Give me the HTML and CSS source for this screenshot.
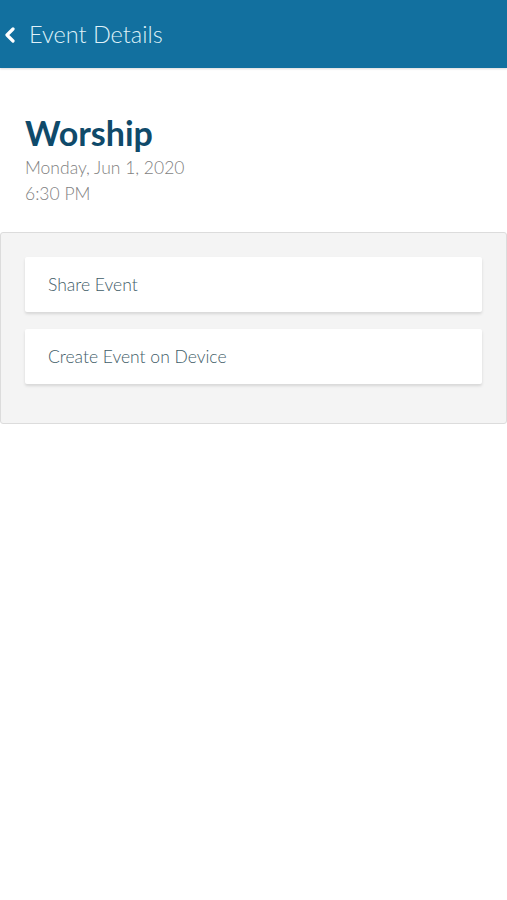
FILE: index.html
```html
<!DOCTYPE html>
<html lang="en">
<head>
  <meta charset="UTF-8" />
  <meta name="viewport" content="width=device-width, initial-scale=1.0"/>
  <title>Event Details</title>
  <link rel="stylesheet" href="styles.css">
</head>
<body>
  <header class="top-bar">
    <button class="back-btn" title="Back">
      <svg width="12" height="16" viewBox="0 0 12 16"><path d="M9 2 L3 8 L9 14" fill="none" stroke="#fff" stroke-width="3.2" stroke-linecap="round" stroke-linejoin="round"/></svg>
    </button>
    <h1>Event Details</h1>
  </header>

  <section class="event-info">
    <h2>Worship</h2>
    <p>Monday, Jun 1, 2020</p>
    <p>6:30 PM</p>
  </section>

  <div class="actions">
    <a class="action-card" href="#">Share Event</a>
    <a class="action-card" href="#">Create Event on Device</a>
  </div>
</body>
</html>
```

FILE: styles.css
```css
body {
  margin: 0;
  font-family: Lato, "Open Sans", sans-serif;
  background: #ffffff;
}

.top-bar {
  height: 68px;
  background-color: #12709f;
  display: flex;
  align-items: center;
  box-shadow: 0 1px 2px rgba(0,0,0,0.15);
}

.back-btn {
  background: none;
  border: none;
  padding: 0 0 0 4px;
  margin: 2px 13px 0 0;
  display: flex;
  cursor: pointer;
}

.top-bar h1 {
  margin: 0;
  font-size: 23.5px;
  font-weight: 300;
  color: #dff0f8;
}

.event-info {
  padding: 45px 25px 0;
  height: 164px;
  box-sizing: border-box;
}

.event-info h2 {
  margin: 0 0 2px;
  font-size: 34px;
  font-weight: 700;
  color: #0f4a6a;
  line-height: 40px;
}

.event-info p {
  margin: 0;
  font-size: 17.5px;
  font-weight: 300;
  color: #7f7f7f;
  line-height: 26px;
}

.actions {
  background: #f4f4f4;
  border: 1px solid #dcdcdc;
  border-radius: 3px;
  padding: 24px 24px 39px;
  display: flex;
  flex-direction: column;
  gap: 17px;
}

.action-card {
  display: block;
  height: 55px;
  line-height: 55px;
  padding-left: 23px;
  background: #ffffff;
  box-shadow: 0 2px 3px rgba(0,0,0,0.12);
  border-radius: 2px;
  font-size: 17.5px;
  font-weight: 300;
  color: #3f5d68;
  text-decoration: none;
}
```
